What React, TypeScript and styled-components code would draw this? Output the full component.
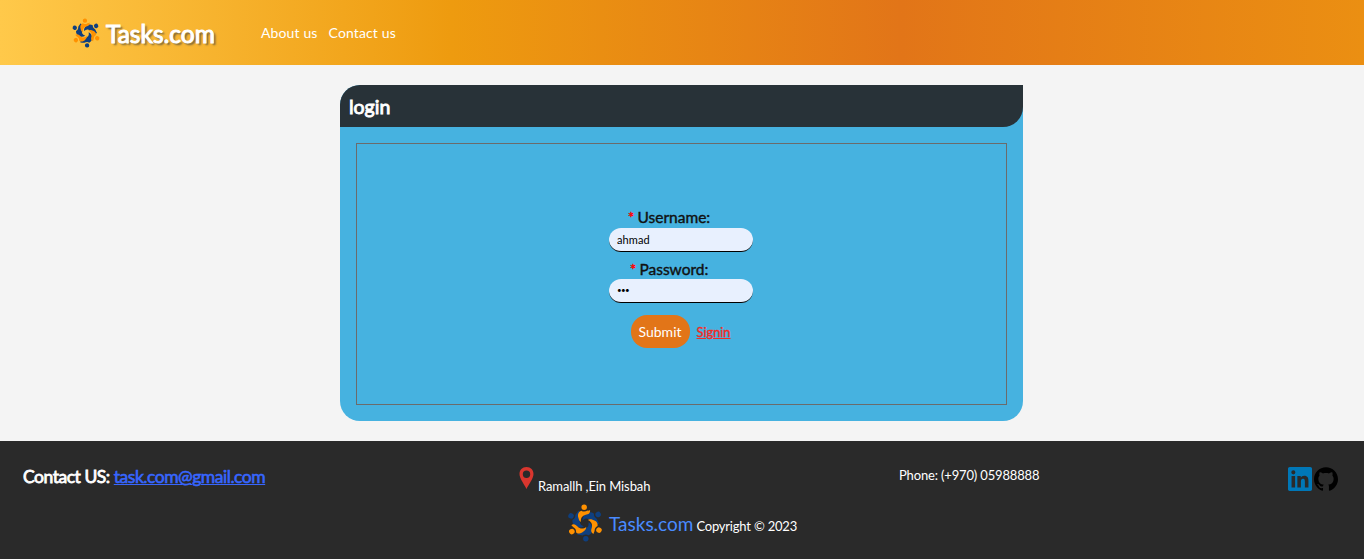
import React from 'react';
import styled, { createGlobalStyle } from 'styled-components';

const GlobalStyle = createGlobalStyle`
  * { box-sizing: border-box; }
  body {
    margin: 0;
    background: #f4f4f4;
    font-family: Lato, "Liberation Sans", sans-serif;
    overflow: hidden;
  }
`;

const Page = styled.div`
  display: flex;
  flex-direction: column;
  height: 559px;
`;

const Header = styled.header`
  display: flex;
  align-items: center;
  height: 65px;
  padding-left: 71px;
  background: linear-gradient(90deg, #ffc94a 0%, #ee9b0f 33%, #e27518 66%, #eb8f12 100%);
`;

const Brand = styled.a`
  display: flex;
  align-items: center;
  width: 190px;
  gap: 5px;
  color: #fff;
  font-size: 24.5px;
  font-weight: 400;
  line-height: 30px;
  -webkit-text-stroke: 1px #fff;
  text-shadow: 2px 2px 2px rgba(60, 60, 60, 0.75);
`;

const BrandName = styled.span`
  padding-top: 2px;
`;

const Nav = styled.nav`
  display: flex;
  gap: 11px;
`;

const NavLink = styled.a`
  color: #fff;
  font-size: 14px;
  letter-spacing: 0.13px;
  line-height: 20px;
`;

const Main = styled.main`
  display: flex;
  justify-content: center;
  height: 376px;
  padding: 20px 1px 20px 0;
`;

const Card = styled.section`
  display: flex;
  flex-direction: column;
  width: 683px;
  background: #46b2e0;
  border-radius: 20px 0 20px 20px;
  overflow: hidden;
`;

const CardTitle = styled.h1`
  height: 42px;
  margin: 0;
  padding: 10px 9px;
  background: #283238;
  border-bottom-right-radius: 20px;
  color: #fff;
  font-size: 19.5px;
  font-weight: 400;
  line-height: 24px;
  -webkit-text-stroke: 0.9px #fff;
`;

const Form = styled.form`
  display: flex;
  flex: 1;
  flex-direction: column;
  align-items: center;
  margin: 16px;
  padding: 63px 2px 0 0;
  border: 1px solid #6b6b6b;
`;

const Label = styled.label<{ $top?: number }>`
  width: 144px;
  margin-top: ${({ $top = 0 }) => $top}px;
  padding-right: 23px;
  color: #111;
  font-size: 15.5px;
  font-weight: 400;
  line-height: 20px;
  text-align: center;
  white-space: nowrap;
  -webkit-text-stroke: 0.4px #111;
`;

const Required = styled.span`
  color: #f00;
  letter-spacing: -0.8px;
  -webkit-text-stroke: 0.4px #f00;
`;

const Input = styled.input`
  width: 144px;
  height: 24px;
  margin-top: 1px;
  padding: 0 8px;
  background: #e8f0fe;
  border: 0;
  border-bottom: 1px solid #000;
  border-radius: 12px;
  color: #000;
  font-family: Lato, sans-serif;
  font-size: 11px;
  letter-spacing: 0.1px;
  text-indent: 0.5px;
  outline: 0;

  &[type='password'] {
    margin-top: 0;
    padding-bottom: 1px;
    font-size: 8px;
    letter-spacing: -0.7px;
  }
`;

const Actions = styled.div`
  display: flex;
  align-items: center;
  gap: 7px;
  margin-top: 12px;
`;

const Submit = styled.button`
  width: 59px;
  height: 33px;
  padding: 0;
  background: #e27518;
  border: 0;
  border-radius: 16px;
  color: #fff;
  font-family: inherit;
  font-size: 14px;
`;

const Signin = styled.a`
  padding-top: 1px;
  color: #f32b25;
  font-size: 12.8px;
  font-weight: 400;
  line-height: 16px;
  text-decoration: underline;
  -webkit-text-stroke: 0.4px #f32b25;
`;

const Footer = styled.footer`
  height: 118px;
  padding: 0 26px 0 23px;
  background: #2a2a2a;
  color: #fff;
  font-size: 13px;
`;

const FooterTop = styled.div`
  display: flex;
  justify-content: space-between;
  align-items: flex-start;
  height: 63px;
  padding-top: 24px;
`;

const Contact = styled.div`
  width: 496px;
  font-size: 17.5px;
  font-weight: 400;
  letter-spacing: -0.47px;
  line-height: 24px;
  -webkit-text-stroke: 0.8px currentColor;
`;

const Mail = styled.a`
  color: #3766ff;
  text-decoration: underline;
  text-decoration-thickness: 1px;
  -webkit-text-stroke: 0.6px #3766ff;
`;

const Address = styled.div`
  display: flex;
  align-items: flex-start;
  gap: 4px;
  width: 380px;
  padding-top: 2px;
`;

const AddressText = styled.span`
  padding-top: 11px;
  letter-spacing: -0.1px;
  line-height: 16px;
`;

const Phone = styled.div`
  flex: 1;
  padding-top: 2px;
  letter-spacing: -0.16px;
  line-height: 16px;
`;

const Social = styled.div`
  display: flex;
  gap: 2px;
  padding-top: 2px;
`;

const Copyright = styled.div`
  display: flex;
  align-items: center;
  padding-left: 543px;
`;

const FooterBrand = styled.a`
  margin: 1px 3px 0 5px;
  color: #498bff;
  font-size: 19px;
  line-height: 24px;
`;

const Note = styled.span`
  padding-top: 5px;
  letter-spacing: -0.2px;
  line-height: 16px;
`;

const Logo = ({ size, turn = -3 }: { size: number; turn?: number }) => (
  <svg width={size} height={size} viewBox="-20 -20 40 40">
    {[60, 180, 300, 0, 120, 240].map((angle, i) => (
      <g key={angle} transform={`rotate(${angle + turn})`} fill={i < 3 ? '#0e3f7f' : '#ff9100'}>
        <circle cx="0" cy="-16.5" r="2.9" />
        <path
          d={
            i < 3
              ? 'M-7.5-5C-8-9-6.500-12-3.200-13.200C-1-11.600 1-11.800 3.200-12.900C5-12.500 7-12.500 8.500-12C8.500-8 5-6.500 1.600-6.200C-2.500-5.800-4.200-3.500-3.600.6C-6-.6-7.200-3-7.500-5Z'
              : 'M-6.600-5.500C-7.600-9.500-6.200-12.200-3.200-13.200C-1-11.600 1-11.800 3.200-12.900C4.600-12.700 5.200-13 6-13.400C6.400-10 4-9 1.200-8.600C-2.500-8-4.600-5-4.200-1.200C-5.600-2-6.400-3.600-6.600-5.500Z'
          }
        />
      </g>
    ))}
  </svg>
);

const App = () => (
  <Page>
    <GlobalStyle />
    <Header>
      <Brand>
        <Logo size={30} turn={-5} />
        <BrandName>Tasks.com</BrandName>
      </Brand>
      <Nav>
        <NavLink>About us</NavLink>
        <NavLink>Contact us</NavLink>
      </Nav>
    </Header>
    <Main>
      <Card>
        <CardTitle>login</CardTitle>
        <Form>
          <Label htmlFor="username"><Required>*</Required> Username:</Label>
          <Input id="username" defaultValue="ahmad" />
          <Label htmlFor="password" $top={7}><Required>*</Required> Password:</Label>
          <Input id="password" type="password" defaultValue="123" />
          <Actions>
            <Submit type="button">Submit</Submit>
            <Signin>Signin</Signin>
          </Actions>
        </Form>
      </Card>
    </Main>
    <Footer>
      <FooterTop>
        <Contact>Contact US: <Mail>task.com@gmail.com</Mail></Contact>
        <Address>
          <svg width="15" height="22" viewBox="0 0 15 22">
            <path fillRule="evenodd" fill="#d9362e" d="M7.5 0C3.2 0 .5 3 .5 7c0 4.5 4.6 10 7 15c2.4-5 7-10.5 7-15c0-4-2.7-7-7-7Zm0 3.500a3.700 3.700 0 1 1 0 7.400a3.700 3.700 0 0 1 0-7.400Z" />
          </svg>
          <AddressText>Ramallh ,Ein Misbah</AddressText>
        </Address>
        <Phone>Phone: (+970) 05988888</Phone>
        <Social>
          <svg width="24" height="24" viewBox="0 0 24 24" fill="#0077b7">
            <path d="M20.447 20.452h-3.554v-5.569c0-1.328-.027-3.037-1.852-3.037-1.853 0-2.136 1.445-2.136 2.939v5.667H9.351V9h3.414v1.561h.046c.477-.9 1.637-1.850 3.370-1.850 3.601 0 4.267 2.370 4.267 5.455v6.286zM5.337 7.433a2.062 2.062 0 1 1 0-4.125 2.062 2.062 0 0 1 0 4.125zm1.782 13.019H3.555V9h3.564v11.452zM22.225 0H1.771C.792 0 0 .774 0 1.729v20.542C0 23.227.792 24 1.771 24h20.451C23.200 24 24 23.227 24 22.271V1.729C24 .774 23.200 0 22.222 0z" />
          </svg>
          <svg width="24" height="24" viewBox="0 0 24 24" fill="#000">
            <path d="M12 .297c-6.630 0-12 5.373-12 12 0 5.303 3.438 9.800 8.205 11.385.6.113.82-.258.82-.577 0-.285-.01-1.040-.015-2.040-3.338.724-4.042-1.610-4.042-1.610C4.422 18.070 3.633 17.700 3.633 17.700c-1.087-.744.084-.729.084-.729 1.205.084 1.838 1.236 1.838 1.236 1.070 1.835 2.809 1.305 3.495.998.108-.776.417-1.305.76-1.605-2.665-.3-5.466-1.332-5.466-5.930 0-1.310.465-2.380 1.235-3.220-.135-.303-.54-1.523.105-3.176 0 0 1.005-.322 3.300 1.230.96-.267 1.980-.399 3-.405 1.020.006 2.040.138 3 .405 2.280-1.552 3.285-1.230 3.285-1.230.645 1.653.24 2.873.12 3.176.765.84 1.230 1.910 1.230 3.220 0 4.610-2.805 5.625-5.475 5.920.42.36.81 1.096.81 2.220 0 1.606-.015 2.896-.015 3.286 0 .315.21.690.825.570C20.565 22.092 24 17.592 24 12.297c0-6.627-5.373-12-12-12" />
          </svg>
        </Social>
      </FooterTop>
      <Copyright>
        <Logo size={38} />
        <FooterBrand>Tasks.com</FooterBrand>
        <Note>Copyright © 2023</Note>
      </Copyright>
    </Footer>
  </Page>
);

export default App;
